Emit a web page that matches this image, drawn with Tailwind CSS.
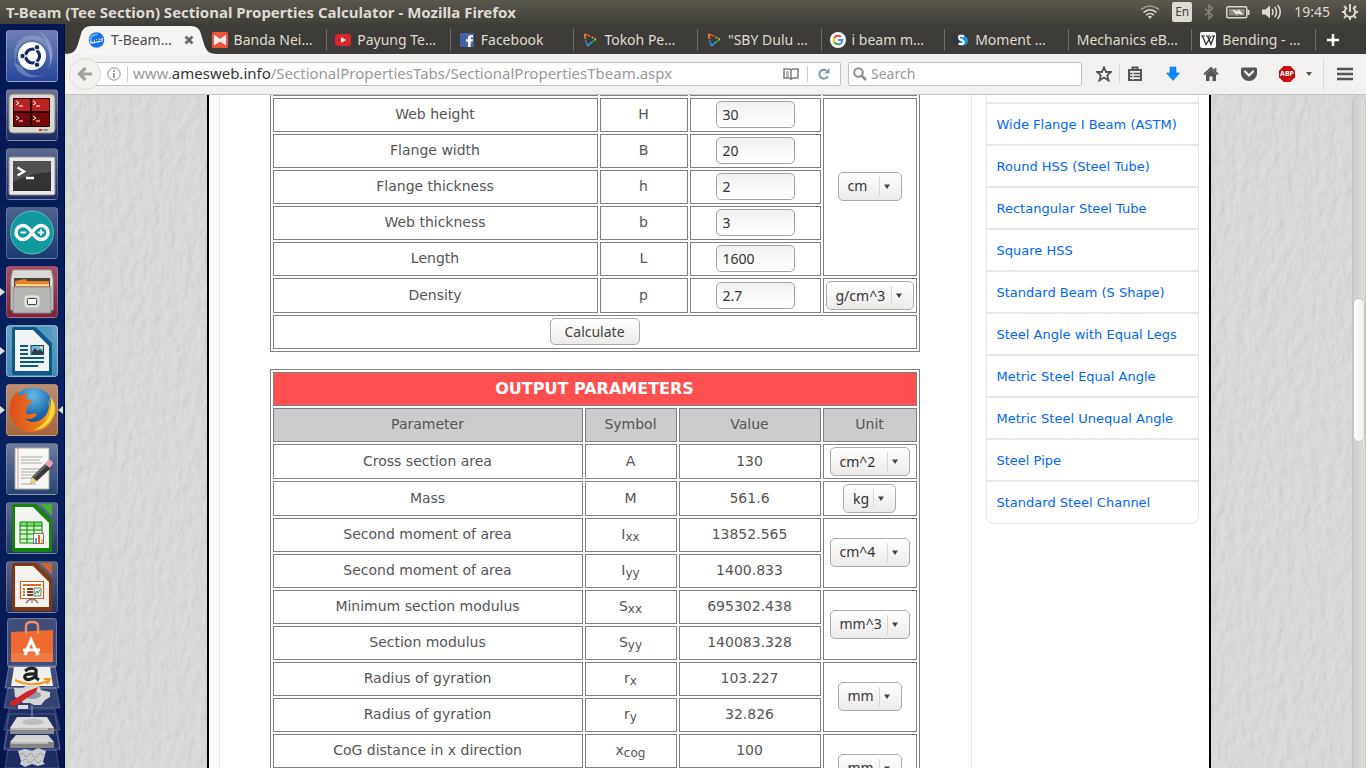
<!DOCTYPE html>
<html lang="en">
<head>
<meta charset="utf-8">
<title>T-Beam (Tee Section) Sectional Properties Calculator</title>
<script src="https://cdn.jsdelivr.net/npm/@tailwindcss/browser@4"></script>
</head>
<body class="h-screen flex flex-col overflow-hidden bg-[#3c3b37] font-['Noto_Sans',sans-serif] text-sm">

<!-- System panel -->
<header class="h-6 shrink-0 flex items-center justify-between pl-1.5 pr-2 bg-linear-to-b from-[#5b584e] to-[#403f3a] text-[#dfdbd2]">
  <h1 class="text-[15px] font-bold leading-6 whitespace-nowrap">T-Beam (Tee Section) Sectional Properties Calculator - Mozilla Firefox</h1>
  <div class="flex items-center">
    <svg class="w-5 h-4 mr-3" viewBox="0 0 20 16" fill="none" stroke="#dfdbd2" stroke-width="1.6"><path d="M1 5.500Q10 -1.500 19 5.500" opacity=".55"/><path d="M3.500 8.500Q10 3 16.500 8.500"/><path d="M6 11.200Q10 7.800 14 11.200"/><path d="M8 12.500L10 15L12 12.500Q10 11.200 8 12.500Z" fill="#dfdbd2" stroke="none"/></svg>
    <span class="w-5 h-5 mr-3 rounded-xs bg-[#dfdbd2] text-[#45433e] text-xs leading-5 text-center">En</span>
    <svg class="w-2.5 h-4 mr-3" viewBox="0 0 10 16" fill="none" stroke="#8a877e" stroke-width="1.300"><path d="M1 4.500L8.500 11.500L5 15V1L8.500 4.500L1 11.500"/></svg>
    <svg class="w-6 h-4 mr-3" viewBox="0 0 24 16"><rect x=".8" y="2.800" width="20" height="11" rx="1.500" fill="none" stroke="#dfdbd2" stroke-width="1.500"/><rect x="3" y="5" width="15.500" height="6.500" fill="#8d8a81"/><path d="M6 5.500L12.500 7.500L12 4.500L17.500 11L11 9.200L11.500 12Z" fill="#f2eee6"/><path d="M21.500 6H23.500V11H21.500Z" fill="#dfdbd2"/></svg>
    <svg class="w-5 h-4 mr-3" viewBox="0 0 20 16" fill="none" stroke="#dfdbd2" stroke-width="1.500"><path d="M0 5.500H3.500L8 1.500V14.500L3.500 10.500H0Z" fill="#dfdbd2" stroke="none"/><path d="M10 5Q12 8 10 11M12.800 3Q16.200 8 12.800 13M15.600 1Q21 8 15.600 15"/></svg>
    <time class="mr-3 leading-6">19:45</time>
    <svg class="w-4 h-4" viewBox="0 0 16 16" fill="none" stroke="#dfdbd2"><path d="M5 3.600A5.200 5.200 0 1 0 11 3.600" stroke-width="2"/><path d="M8 0V8" stroke-width="1.900"/><path d="M3.800 3.800L2 2M12.200 3.800L14 2M2.800 8H0M16 8H13.200M3.800 12.200L2 14M12.200 12.200L14 14M8 13V16" stroke-width="2"/></svg>
  </div>
</header>

<div class="flex-1 min-h-0 flex">

<!-- Launcher -->
<nav aria-label="Launcher" class="w-[65px] shrink-0 flex flex-col items-center gap-[7px] pt-1.5 pr-px overflow-hidden border-r border-[#020b30] bg-linear-to-b from-[#061653] via-[#0a2261] to-[#06164f]">
  <button aria-label="Dash" class="w-[52px] h-[52px] shrink-0 rounded-sm border border-white/30 bg-linear-to-b from-[#6d80b4] to-[#26479b]">
    <svg class="w-[50px] h-[50px]" viewBox="1 1 50 50"><path d="M10 33C4 14 16 3 32 6C44 10 48 24 44 33C45 20 38 11 27 10C16 9 9 19 10 33Z" fill="#fff" opacity=".2"/><path d="M8 32C11 46 25 52 41 43C32 48 21 46 16 37Z M33 2C47 9 51 25 42 40C46 26 44 13 33 2Z" fill="#fff" opacity=".25"/><circle cx="26" cy="26" r="14" fill="#fff"/><circle cx="26.500" cy="26" r="7" fill="none" stroke="#152762" stroke-width="3.200"/><path d="M26 26L15 26M26 26L32 16M26 26L32 36" stroke="#fff" stroke-width="1.500"/><circle cx="27" cy="26" r="4.800" fill="#fff"/><g fill="#152762" stroke="#fff" stroke-width="1"><circle cx="16.500" cy="26" r="2.700"/><circle cx="31" cy="17.300" r="2.700"/><circle cx="31" cy="34.700" r="2.700"/></g></svg>
  </button>
  <button aria-label="Terminator" class="w-[52px] h-[52px] shrink-0 rounded-sm border border-white/20 bg-linear-to-b from-[#6d7593] to-[#1a2a61]">
    <svg class="w-[50px] h-[50px]" viewBox="1 1 50 50"><rect x="3" y="5" width="46" height="39" rx="4" fill="#d9dad2" stroke="#85867f"/><rect x="7" y="9" width="37" height="29" rx="1" fill="#240000"/><path d="M8 10H24V22H8ZM26 10H43V22H26Z" fill="#bd2222"/><path d="M8 24H24V37H8ZM26 24H43V37H26Z" fill="#720a0a"/><g fill="none" stroke="#fff" stroke-width="1"><path d="M10 12L13 14L10 16M13 17H17"/><path d="M27 12L30 14L27 16M30 17H34M10 27L13 29L10 31M13 32H17M27 27L30 29L27 31M30 32H34"/></g><path d="M33 41H36" stroke="#e22" stroke-width="2"/><path d="M37 41H42" stroke="#999" stroke-width="2"/></svg>
  </button>
  <button aria-label="Terminal" class="w-[52px] h-[52px] shrink-0 rounded-sm border border-white/20 bg-linear-to-b from-[#5c6990] to-[#1a2a61]">
    <svg class="w-[50px] h-[50px]" viewBox="1 1 50 50"><rect x="3" y="9" width="46" height="38" rx="1.500" fill="#e9e9e7" stroke="#8e8e8e"/><rect x="7" y="13" width="38" height="30" fill="#333"/><path d="M7 13H45V24Q28 24 7 34Z" fill="#505050"/><path d="M11.500 19.500L18 23.500L11.500 27.500M20 30H28" fill="none" stroke="#fff" stroke-width="2.300"/></svg>
  </button>
  <button aria-label="Arduino IDE" class="w-[52px] h-[52px] shrink-0 rounded-sm border border-white/20 bg-linear-to-b from-[#4c638f] to-[#1a3a71]">
    <svg class="w-[50px] h-[50px]" viewBox="1 1 50 50"><circle cx="26" cy="25.500" r="21.500" fill="#12999f" stroke="#5cc0bf"/><path d="M26 25.500C22 19.500 19 18.500 17 18.500A7 7 0 0 0 17 32.500C19 32.500 22 31.500 26 25.500C30 19.500 33 18.500 35 18.500A7 7 0 0 1 35 32.500C33 32.500 30 31.500 26 25.500Z" fill="none" stroke="#fff" stroke-width="3.400"/><path d="M14.500 25.500H20M32 25.500H38M35 22.500V28.500" stroke="#fff" stroke-width="2"/></svg>
  </button>
  <div class="relative h-[52px] shrink-0 w-full flex justify-center">
    <svg class="absolute left-0 top-5 w-[5px] h-3" viewBox="0 0 5 12"><path d="M0 2L5 6L0 10Z" fill="#ddd"/></svg>
    <button aria-label="Files" class="w-[52px] h-[52px] rounded-sm border border-white/20 bg-linear-to-b from-[#9f5366] to-[#7a2439]">
      <svg class="w-[50px] h-[50px]" viewBox="1 1 50 50"><path d="M7 4H45L47 12V44H5V12Z" fill="#d9dad8" stroke="#a2a2a2"/><path d="M8 12H44V25H8Z" fill="#4a423d"/><path d="M9 15L19 13L21 15H43V25H9Z" fill="#e78128"/><path d="M10 18H43V20H10Z" fill="#ffd28d"/><path d="M7 21H45V47H7Z" fill="#b5b6b4" stroke="#888"/><rect x="19" y="30" width="14" height="11" rx="2" fill="#d6d6d6" stroke="#eee"/><rect x="21.500" y="32.500" width="9" height="6" rx="1" fill="#fff" stroke="#444"/></svg>
    </button>
  </div>
  <div class="relative h-[52px] shrink-0 w-full flex justify-center">
    <svg class="absolute left-0 top-5 w-[5px] h-3" viewBox="0 0 5 12"><path d="M0 2L5 6L0 10Z" fill="#ddd"/></svg>
    <button aria-label="LibreOffice Writer" class="w-[52px] h-[52px] rounded-sm border border-white/30 bg-linear-to-b from-[#6ba3c3] to-[#3f8bb5]">
      <svg class="w-[50px] h-[50px]" viewBox="1 1 50 50"><path d="M8 2H30L46 18V50H8Q6 50 6 47V4Q6 2 8 2Z" fill="#10588a"/><path d="M31 2H46V16Z" fill="#4f98c2"/><path d="M9 5H27L43 21V46H9Z" fill="#f1f3f4"/><path d="M14 21H22M14 25H22M14 29H22M14 33H38M14 37H38M14 41H32" stroke="#0c5688" stroke-width="2"/><rect x="25" y="20.500" width="12.500" height="9" fill="#6fb5e5" stroke="#0c4a76"/><path d="M26 29V27L29 23L32 26L34 24L37 27V29Z" fill="#333f45"/><circle cx="35.500" cy="22.500" r="1.500" fill="#fd5"/></svg>
    </button>
  </div>
  <div class="relative h-[52px] shrink-0 w-full flex justify-center">
    <svg class="absolute left-0 top-5 w-[5px] h-3" viewBox="0 0 5 12"><path d="M0 2L5 6L0 10Z" fill="#ddd"/></svg>
    <svg class="absolute right-0 top-5 w-[5px] h-3" viewBox="0 0 5 12"><path d="M5 2L0 6L5 10Z" fill="#ddd"/></svg>
    <button aria-label="Firefox" class="w-[52px] h-[52px] rounded-sm border border-white/20 bg-linear-to-b from-[#b98e73] to-[#a2683f]">
      <svg class="w-[50px] h-[50px]" viewBox="1 1 50 50"><defs><radialGradient id="globe" cx=".5" cy=".2" r=".8"><stop offset="0" stop-color="#67bce6"/><stop offset=".6" stop-color="#1d68ad"/><stop offset="1" stop-color="#123a73"/></radialGradient><linearGradient id="fox" x1="0" y1="0" x2="1" y2="0"><stop offset="0" stop-color="#dc4e1c"/><stop offset=".65" stop-color="#ef7a1c"/><stop offset="1" stop-color="#fbc51d"/></linearGradient></defs><circle cx="27" cy="24" r="20.500" fill="url(#globe)"/><path d="M8 11C9 9 11 8 12 8C12 10 13 11 14 12C17 10 20 10 22 10C20 12 20 14 20 15C23 16 26 16 26 18C25 20 22 20 21 22C22 26 19 27 20 29C23 32 26 28 31 30C29 35 22 36 19 34C24 41 35 38 40 31C43 26 44 21 42 16C44 18 45 22 44 26C46 22 46 16 44 13C50 19 51 27 47 34C43 43 35 48 26 48C12 48 4 37 4 26C4 20 5 15 8 11Z" fill="url(#fox)"/><path d="M44 13C50 20 49 31 43 38C38 44 32 46 28 46C37 42 43 35 44 28C45 23 45 17 44 13Z" fill="#fddd39"/></svg>
    </button>
  </div>
  <button aria-label="Text Editor" class="w-[52px] h-[52px] shrink-0 rounded-sm border border-white/20 bg-linear-to-b from-[#6f7c9d] to-[#2c426f]">
    <svg class="w-[50px] h-[50px]" viewBox="1 1 50 50"><path d="M9 5H43V46H9Z" fill="#f7f7f3" stroke="#aaa"/><path d="M12 5V46" stroke="#d99"/><path d="M15 14H37M15 17H34M15 20H36M15 26H36M15 29H33M15 32H35M15 35H30M15 41H30" stroke="#aaa"/><path d="M24 41L26 34L41 19L46 24L31 38Z" fill="#383838"/><path d="M28 34L42 20" stroke="#777" stroke-width="1.500"/><path d="M24 41L26 34L31 38Z" fill="#ecd77a"/><path d="M39 21L42 17Q45 16 47 20L44 25Z" fill="#e89fbc"/></svg>
  </button>
  <button aria-label="LibreOffice Calc" class="w-[52px] h-[52px] shrink-0 rounded-sm border border-white/20 bg-linear-to-b from-[#5d6d91] to-[#213765]">
    <svg class="w-[50px] h-[50px]" viewBox="1 1 50 50"><path d="M8 2H30L46 18V50H8Q6 50 6 47V4Q6 2 8 2Z" fill="#15830b"/><path d="M34 2H46V14Z" fill="#43b235"/><path d="M9 5H27L43 21V46H9Z" fill="#f1f3f1"/><path d="M14 20H36V41H14Z" fill="#d4f7cc"/><path d="M14 20H36V24H14Z" fill="#7edb6f"/><path d="M14 20H36V41H14ZM14 24H36M14 28H36M14 32H36M14 37H36M21 20V41M28 20V41" fill="none" stroke="#118605"/><rect x="27.500" y="31.500" width="10" height="10" fill="#fff" stroke="#777"/><path d="M29 36H31V41H29Z" fill="#59d"/><path d="M32 33H34V41H32Z" fill="#e65a1f"/><path d="M35 37H37V41H35Z" fill="#fb3"/></svg>
  </button>
  <button aria-label="LibreOffice Impress" class="w-[52px] h-[52px] shrink-0 rounded-sm border border-white/20 bg-linear-to-b from-[#5d6483] to-[#223261]">
    <svg class="w-[50px] h-[50px]" viewBox="1 1 50 50"><path d="M8 2H30L46 18V50H8Q6 50 6 47V4Q6 2 8 2Z" fill="#833711"/><path d="M34 2H46V14Z" fill="#c76834"/><path d="M9 5H27L43 21V46H9Z" fill="#f4f2f0"/><path d="M14.500 20.500H37.500V37.500H14.500ZM26 38V42" fill="#fff" stroke="#d35a1b" stroke-width="1.200"/><path d="M17 24H35" stroke="#d86c2d" stroke-width="2"/><path d="M21 28H27M21 31H27M21 34H27" stroke="#823713" stroke-width="2"/><path d="M17 28H19M17 31H19M17 34H19" stroke="#d86c2d" stroke-width="2"/><path d="M28 27H35V35H28Z" fill="#e5f0e5" stroke="#777"/><path d="M29 33L31 30L32 32L34 29" fill="none" stroke="#1b9b33"/><path d="M20 42Q26 34 32 42" fill="none" stroke="#777" stroke-width="1.500"/></svg>
  </button>
  <!-- Folded end of the launcher -->
  <svg class="w-full h-[150px] -mt-0.5 shrink-0" viewBox="0 618 63 150">
    <rect x="7.500" y="618.500" width="49" height="49" rx="3" fill="#8a8ca6" fill-opacity=".45" stroke="#9ba3c0" stroke-opacity=".6"/>
    <path d="M11 632L53 630V662H11Z" fill="#ee6a30"/><path d="M11 653H53V662H11Z" fill="#f07a46"/><path d="M26 634V626Q26 622 32 622Q38 622 38 626V634" fill="none" stroke="#ef8d62" stroke-width="2.500"/>
    <path d="M25 655L31 640L38 655M23 650H40" fill="none" stroke="#fff" stroke-width="3.200"/>
    <path d="M9 666H55L59 688H5Z" fill="#a1a8c1" fill-opacity=".35" stroke="#a5aed0" stroke-opacity=".5"/>
    <path d="M14 667H50L53 686H11Z" fill="#f1f1ee"/>
    <path d="M25 671Q32 666 36 670V678L39 680M36 674Q23 673 25 678Q28 682 36 676" fill="none" stroke="#222" stroke-width="3.200"/><path d="M15 680Q32 688 48 681M44 679L50 679L47 684" fill="none" stroke="#f49a18" stroke-width="2"/>
    <path d="M8 688H56L60 708H4Z" fill="#a1a8c1" fill-opacity=".3" stroke="#a5aed0" stroke-opacity=".4"/>
    <path d="M14 688H23L26 686H39L41 690L50 692V697L45 700L41 705H34L30 703H23L20 699L15 697Z" fill="#d6d6d6"/><ellipse cx="32" cy="695" rx="9" ry="4" fill="#8f95ab"/><path d="M10 702L28 691L38 687L36 692L15 706Q9 706 10 702Z" fill="#cf2424"/><path d="M18 705H28V709H18Z" fill="#ddd"/>
    <path d="M32 705V722" stroke="#99a" stroke-width="1"/>
    <path d="M9 709H55L60 730H4ZM9 714H55L60 748H4ZM8 730H56L60 750H4ZM8 750H56L59 768H5Z" fill="#a1a8c1" fill-opacity=".15" stroke="#a5aed0" stroke-opacity=".35"/>
    <path d="M17 717H47L54 728H10Z" fill="#dcdcdc"/><path d="M10 728H54V734H10Z" fill="#8b8b8b"/><path d="M11 729H48" stroke="#eee"/><ellipse cx="33" cy="722" rx="11" ry="3" fill="#bdbdbd"/>
    <path d="M16 735H48L54 742H10Z" fill="#d6d6d6"/><path d="M10 742H54V748H10Z" fill="#858585"/><path d="M11 743H48" stroke="#eee"/>
    <path d="M18 751L25 749L32 751L38 748L46 751L43 762L45 764L38 766L32 764L25 767L20 764L21 761Z" fill="#c9ccce"/><path d="M19 755L23 753L26 757L31 753L35 758L40 753L44 755M22 761L26 759L30 763L34 759L38 763L42 760" fill="none" stroke="#9a9fa6" stroke-width="1"/>
  </svg>
</nav>

<!-- Browser window -->
<div class="flex-1 min-w-0 flex flex-col">

  <div role="tablist" class="h-[30px] shrink-0 flex pt-0.5 pl-[15px] bg-[#3c3b37] text-[#dfdbd2] whitespace-nowrap">
    <div role="tab" aria-selected="true" class="relative flex-1 min-w-0 flex items-center pl-2 gap-1.5 text-[#4c4c4c]">
      <svg class="absolute -left-[15px] top-0 w-[152px] h-7" viewBox="0 0 152 28" preserveAspectRatio="none"><path d="M0 28C9 28 11 24 13 18L16 8Q18 0 26 0H126Q134 0 136 8L139 18C141 24 143 28 152 28Z" fill="#f6f5f4"/></svg>
      <svg class="relative w-[17px] h-4 shrink-0" viewBox="0 0 16 16"><circle cx="8" cy="8" r="7.800" fill="#1470ea"/><path d="M1.500 8Q3 2 9 2.500" fill="none" stroke="#7cc3fa" stroke-width="1.500"/><path d="M1 9L14.500 5.500L14 9.500L2 12Z" fill="#d7eaff"/><path d="M3 10.500L4.500 8L5.500 10M7 9.700V7.500L8.500 9.300L9.500 7V9M11 6.800L13 6.500M11 8.700L13 8.200" fill="none" stroke="#1248a5"/></svg>
      <span class="relative flex-1">T-Beam…</span>
      <button aria-label="Close tab" class="relative mr-[9px]"><svg class="w-2.5 h-2.5" viewBox="0 0 10 10"><path d="M1.500 1.500L8.500 8.500M8.500 1.500L1.500 8.500" stroke="#666" stroke-width="2.600"/></svg></button>
    </div>
    <div role="tab" class="flex-1 min-w-0 flex items-center pl-[9px] gap-1.5"><svg class="w-4 h-4 shrink-0" viewBox="0 0 16 16"><rect width="16" height="16" rx="1.500" fill="#ef5139"/><path d="M2 2.500L8 7L14 2.500V13.500L8 9.500L2 13.500Z" fill="#fff" fill-opacity=".9"/></svg>Banda Nei…</div>
    <div class="w-px h-[22px] mt-[3px] -mr-px bg-[#706e68]"></div>
    <div role="tab" class="flex-1 min-w-0 flex items-center pl-[9px] gap-1.5"><svg class="w-4 h-4 shrink-0" viewBox="0 0 16 16"><rect y="2" width="16" height="12" rx="2" fill="#d9252a"/><path d="M6 5.300L11 8L6 10.700Z" fill="#fff"/></svg>Payung Te…</div>
    <div class="w-px h-[22px] mt-[3px] -mr-px bg-[#706e68]"></div>
    <div role="tab" class="flex-1 min-w-0 flex items-center pl-[9px] gap-1.5"><svg class="w-4 h-4 shrink-0" viewBox="0 0 16 16"><rect x="1" y="1" width="14" height="14" fill="#4562a2"/><path d="M9 15V9.500H7V7.200H9V5.500Q9 3 12 3H14V5.300H12.700Q11.700 5.300 11.700 6V7.200H14L13.600 9.500H11.700V15Z" fill="#fff"/></svg>Facebook</div>
    <div class="w-px h-[22px] mt-[3px] -mr-px bg-[#706e68]"></div>
    <div role="tab" class="flex-1 min-w-0 flex items-center pl-[9px] gap-1.5"><svg class="w-4 h-4 shrink-0" viewBox="0 0 16 16" fill="none" stroke-width="1.600"><path d="M2.500 2L8 4" stroke="#e95726"/><path d="M2.500 2L3.500 7" stroke="#f0882b"/><path d="M3.500 8L5.500 14" stroke="#2f83d2"/><path d="M5.500 14L10 10" stroke="#36a4df"/><path d="M10 10L14 7.500" stroke="#259c56"/><path d="M14 7.500L8.500 4.500" stroke="#d7b13b" stroke-dasharray="2 1"/></svg>Tokoh Pe…</div>
    <div class="w-px h-[22px] mt-[3px] -mr-px bg-[#706e68]"></div>
    <div role="tab" class="flex-1 min-w-0 flex items-center pl-[9px] gap-1.5"><svg class="w-4 h-4 shrink-0" viewBox="0 0 16 16" fill="none" stroke-width="1.600"><path d="M2.500 2L8 4" stroke="#e95726"/><path d="M2.500 2L3.500 7" stroke="#f0882b"/><path d="M3.500 8L5.500 14" stroke="#2f83d2"/><path d="M5.500 14L10 10" stroke="#36a4df"/><path d="M10 10L14 7.500" stroke="#259c56"/><path d="M14 7.500L8.500 4.500" stroke="#d7b13b" stroke-dasharray="2 1"/></svg>"SBY Dulu …</div>
    <div class="w-px h-[22px] mt-[3px] -mr-px bg-[#706e68]"></div>
    <div role="tab" class="flex-1 min-w-0 flex items-center pl-[9px] gap-1.5"><svg class="w-4 h-4 shrink-0" viewBox="0 0 16 16" fill="none" stroke-width="2"><circle cx="8" cy="8" r="8" fill="#fff"/><path d="M4.300 5.800A4.300 4.300 0 0 1 11 4.900" stroke="#ea4335"/><path d="M4.300 10.200A4.600 4.600 0 0 1 4.300 5.800" stroke="#fbbc05"/><path d="M4.300 10.200A4.300 4.300 0 0 0 10.900 11.200" stroke="#34a853"/><path d="M10.900 11.200Q12.300 10 12.300 8H8.200" stroke="#4285f4"/></svg>i beam m…</div>
    <div class="w-px h-[22px] mt-[3px] -mr-px bg-[#706e68]"></div>
    <div role="tab" class="flex-1 min-w-0 flex items-center pl-[9px] gap-1.5"><svg class="w-4 h-4 shrink-0" viewBox="0 0 16 16"><circle cx="4.500" cy="8.500" r="4.500" fill="#2d333a"/><path d="M9 2Q15 5 15 9Q15 13 9 14L6 8Z" fill="#2496cf"/><path d="M11 4.500Q5.500 2.500 5.800 5.500Q6.200 7.500 8.500 8Q11.500 9 10.500 11Q9 13 5.500 11.500" fill="none" stroke="#fff" stroke-width="2"/></svg>Moment …</div>
    <div class="w-px h-[22px] mt-[3px] -mr-px bg-[#706e68]"></div>
    <div role="tab" class="flex-1 min-w-0 flex items-center pl-[9px] gap-1.5">Mechanics eB…</div>
    <div class="w-px h-[22px] mt-[3px] -mr-px bg-[#706e68]"></div>
    <div role="tab" class="flex-1 min-w-0 flex items-center pl-[9px] gap-1.5"><svg class="w-4 h-4 shrink-0" viewBox="0 0 16 16"><rect width="16" height="16" rx="2" fill="#fff"/><path d="M1 4H5M6 4H10M11.500 4H15M2.500 4L6 12.500L11 4.500M7.500 4L11 12.500L14 4" fill="none" stroke="#222" stroke-width="1.200"/></svg>Bending - …</div>
    <div class="w-px h-[22px] mt-[3px] -mr-px bg-[#706e68]"></div>
    <button aria-label="New tab" class="w-[51px] shrink-0 pl-[11px] flex items-center"><svg class="w-3.5 h-3.5" viewBox="0 0 14 14"><path d="M7 1V13M1 7H13" stroke="#fff" stroke-width="2.600"/></svg></button>
  </div>

  <div class="h-[41px] shrink-0 flex items-center pl-1 pr-[9px] bg-[#f3f2f1] border-b border-[#c9c4bf]">
    <button aria-label="Back" class="relative z-10 w-8 h-8 shrink-0 rounded-full border border-[#dcdad7] bg-[#f3f2f1] flex items-center justify-center"><svg class="w-4 h-4" viewBox="0 0 16 16"><path d="M8.500 2L2.500 8L8.500 14M3 8H15" fill="none" stroke="#a0a09e" stroke-width="3.200"/></svg></button>
    <div class="flex-1 min-w-0 h-6 -ml-2 pl-[13px] flex items-center rounded-r-xs border border-[#c4c1bd] bg-white">
      <svg class="w-3.5 h-3.5 shrink-0" viewBox="0 0 14 14"><circle cx="7" cy="7" r="6.200" fill="none" stroke="#8c8c8c"/><path d="M7 6V11M7 3V5" stroke="#8c8c8c" stroke-width="1.600"/></svg>
      <span class="w-px h-4 ml-1.5 mr-[5px] bg-[#ccc]"></span>
      <div class="flex-1 whitespace-nowrap text-[15px] text-[#999]">www.<span class="text-[#333]">amesweb.info</span>/SectionalPropertiesTabs/SectionalPropertiesTbeam.aspx</div>
      <svg class="w-4 h-3 shrink-0" viewBox="0 0 16 12" fill="none" stroke="#7c7c7c" stroke-width="1.500"><path d="M8 2V11.500M8 2Q7 1 5 1H1V10H5.500Q7.500 10 8 11.500Q8.500 10 10.500 10H15V1H11Q9 1 8 2"/><path d="M3 4H6M3 6H6M3 8H6" stroke-width="1"/></svg>
      <span class="w-px h-4 ml-2 mr-2.5 bg-[#ccc]"></span>
      <svg class="w-3 h-3 mr-2.5 shrink-0" viewBox="0 0 12 12"><path d="M10 8A4.500 4.500 0 1 1 8.500 2.500" fill="none" stroke="#8499ae" stroke-width="2"/><path d="M11.500 0V5.500H6Z" fill="#8499ae"/></svg>
    </div>
    <label class="w-[234px] shrink-0 h-6 ml-[7px] pl-1 flex items-center gap-1 rounded-xs border border-[#c4c1bd] bg-white">
      <svg class="w-3.5 h-3.5 shrink-0" viewBox="0 0 14 14"><circle cx="5.500" cy="5.500" r="4.300" fill="none" stroke="#8d8d8d" stroke-width="2"/><path d="M8.500 8.500L13 13" stroke="#8d8d8d" stroke-width="2.600"/></svg>
      <input aria-label="Search" type="text" placeholder="Search" class="w-full bg-transparent outline-none placeholder:text-[#999]">
    </label>
    <button aria-label="Bookmark this page" class="ml-3.5 shrink-0"><svg class="w-4 h-4" viewBox="0 0 16 16"><path d="M8 1.300L10 6H15L11.200 9.300L12.600 14.500L8 11.500L3.400 14.500L4.800 9.300L1 6H6Z" fill="none" stroke="#555" stroke-width="1.800"/></svg></button>
    <span class="w-px h-[18px] ml-[7px] mr-2 bg-[#d4d2cf]"></span>
    <button aria-label="Bookmarks list" class="shrink-0"><svg class="w-3.5 h-4" viewBox="0 0 14 16" fill="none" stroke="#555"><path d="M1 4H13V14H1Z" stroke-width="2"/><path d="M4.500 3.500V1.500H9.500V3.500" stroke-width="2"/><path d="M2 7.500H12M2 10.500H12" stroke-width="1.400"/><path d="M5 5V14" stroke="#f3f2f1"/></svg></button>
    <button aria-label="Downloads" class="ml-6 shrink-0"><svg class="w-3.5 h-4" viewBox="0 0 14 16"><path d="M4 1H10V7H13.500L7 14.500L.5 7H4Z" fill="#0a8cff" stroke="#0a70d8" stroke-width=".6"/></svg></button>
    <button aria-label="Home" class="ml-[23px] shrink-0"><svg class="w-4 h-4" viewBox="0 0 16 16"><path d="M8 3.500L13 8V15H9.500V10.500H6.500V15H3V8Z" fill="#555"/><path d="M1 8.500L8 2L15 8.500M12.500 2V5" fill="none" stroke="#555" stroke-width="1.900"/></svg></button>
    <button aria-label="Pocket" class="ml-[22px] shrink-0"><svg class="w-4 h-4" viewBox="0 0 16 16"><path d="M1.500 1.500H14.500Q16 1.500 16 3V7.500A8 7.500 0 0 1 0 7.500V3Q0 1.500 1.500 1.500Z" fill="#555"/><path d="M4 5.500L8 9.500L12 5.500" fill="none" stroke="#f3f2f1" stroke-width="2.200" stroke-linecap="round"/></svg></button>
    <button aria-label="Adblock Plus" class="relative ml-[22px] w-4 h-4 shrink-0 flex items-center justify-center"><svg class="absolute inset-0 w-4 h-4" viewBox="0 0 16 16"><path d="M4.700 0H11.300L16 4.700V11.300L11.300 16H4.700L0 11.300V4.700Z" fill="#c70d0d"/></svg><span class="relative text-[7px] font-bold text-white">ABP</span></button>
    <svg class="w-1.5 h-1.5 ml-[11px] shrink-0" viewBox="0 0 6 6"><path d="M0 1H6L3 5Z" fill="#555"/></svg>
    <span class="w-px h-8 ml-[11px] mr-[13px] bg-[#dddbd8]"></span>
    <button aria-label="Menu" class="mr-1 shrink-0"><svg class="w-4 h-3.5" viewBox="0 0 16 14"><path d="M0 2H16M0 7H16M0 12H16" stroke="#555" stroke-width="2.600"/></svg></button>
  </div>

  <!-- Page -->
  <div class="relative flex-1 min-h-0 flex bg-[#d0d0d0] font-['DejaVu_Sans',sans-serif] text-[#555]">
    <svg class="absolute inset-0 w-full h-full" aria-hidden="true">
      <filter id="plaster" x="0" y="0" width="100%" height="100%"><feTurbulence type="fractalNoise" baseFrequency=".12 .07" numOctaves="5" seed="4" result="n"/><feDiffuseLighting in="n" surfaceScale=".9" diffuseConstant="1" lighting-color="#dedede"><feDistantLight azimuth="215" elevation="70"/></feDiffuseLighting></filter>
      <rect width="100%" height="100%" filter="url(#plaster)"/>
    </svg>
    <main class="relative flex-1 min-w-0 overflow-hidden">
      <div class="w-[1004px] h-full mx-auto flex border-x-2 border-black bg-white pl-2.5">
        <div class="w-[753px] shrink-0 border-x border-[#e6e6e6]">
          <table class="w-[650px] ml-[50px] -mt-0.5 table-fixed border-separate border-spacing-[2px] border border-t-0 border-[#808080] text-center text-sm leading-5">
            <colgroup><col class="w-[325px]"><col class="w-[88px]"><col class="w-[131px]"><col class="w-[94px]"></colgroup>
            <tbody>
            <tr class="h-px"><td class="border-b border-[#808080]"></td><td class="border-b border-[#808080]"></td><td class="border-b border-[#808080]"></td><td class="border-b border-[#808080]"></td></tr>
            <tr class="h-[34px]"><td class="border border-[#808080] pb-0.5"><label for="H">Web height</label></td><td class="border border-[#808080] pb-0.5">H</td><td class="border border-[#808080]"><input id="H" value="30" class="block mx-auto mb-px w-[79px] h-[27px] px-1.5 rounded-[5px] border border-[#a5a3a0] bg-linear-to-b from-[#f1f1f1] to-white font-['Noto_Sans',sans-serif] text-[#333]"></td>
              <td rowspan="5" class="border border-[#808080]"><span class="relative inline-block align-middle mb-0.5"><select aria-label="Length unit" class="block w-16 h-[29px] appearance-none rounded-[5px] border border-[#aeaba7] bg-linear-to-b from-white to-[#edebea] pl-[9px] font-['Noto_Sans',sans-serif] text-[#333]"><option>cm</option></select><svg class="absolute right-2.5 top-[5px] w-[13px] h-[19px] pointer-events-none" viewBox="0 0 13 19"><path d="M.5 0V19" stroke="#d8d6d3"/><path d="M5 7.500H11L8 12Z" fill="#444"/></svg></span></td></tr>
            <tr class="h-[34px]"><td class="border border-[#808080] pb-0.5"><label for="B">Flange width</label></td><td class="border border-[#808080] pb-0.5">B</td><td class="border border-[#808080]"><input id="B" value="20" class="block mx-auto mb-px w-[79px] h-[27px] px-1.5 rounded-[5px] border border-[#a5a3a0] bg-linear-to-b from-[#f1f1f1] to-white font-['Noto_Sans',sans-serif] text-[#333]"></td></tr>
            <tr class="h-[34px]"><td class="border border-[#808080] pb-0.5"><label for="hh">Flange thickness</label></td><td class="border border-[#808080] pb-0.5">h</td><td class="border border-[#808080]"><input id="hh" value="2" class="block mx-auto mb-px w-[79px] h-[27px] px-1.5 rounded-[5px] border border-[#a5a3a0] bg-linear-to-b from-[#f1f1f1] to-white font-['Noto_Sans',sans-serif] text-[#333]"></td></tr>
            <tr class="h-[34px]"><td class="border border-[#808080] pb-0.5"><label for="bb">Web thickness</label></td><td class="border border-[#808080] pb-0.5">b</td><td class="border border-[#808080]"><input id="bb" value="3" class="block mx-auto mb-px w-[79px] h-[27px] px-1.5 rounded-[5px] border border-[#a5a3a0] bg-linear-to-b from-[#f1f1f1] to-white font-['Noto_Sans',sans-serif] text-[#333]"></td></tr>
            <tr class="h-[34px]"><td class="border border-[#808080] pb-0.5"><label for="L">Length</label></td><td class="border border-[#808080] pb-0.5">L</td><td class="border border-[#808080]"><input id="L" value="1600" class="block mx-auto mb-px w-[79px] h-[27px] px-1.5 rounded-[5px] border border-[#a5a3a0] bg-linear-to-b from-[#f1f1f1] to-white font-['Noto_Sans',sans-serif] text-[#333]"></td></tr>
            <tr class="h-[35px]"><td class="border border-[#808080] pb-0.5"><label for="p">Density</label></td><td class="border border-[#808080] pb-0.5">p</td><td class="border border-[#808080]"><input id="p" value="2.7" class="block mx-auto w-[79px] h-[27px] px-1.5 rounded-[5px] border border-[#a5a3a0] bg-linear-to-b from-[#f1f1f1] to-white font-['Noto_Sans',sans-serif] text-[#333]"></td>
              <td class="border border-[#808080]"><span class="relative inline-block align-middle"><select aria-label="Density unit" class="block w-[88px] h-[29px] appearance-none rounded-[5px] border border-[#aeaba7] bg-linear-to-b from-white to-[#edebea] pl-[9px] font-['Noto_Sans',sans-serif] text-[#333]"><option>g/cm^3</option></select><svg class="absolute right-2.5 top-[5px] w-[13px] h-[19px] pointer-events-none" viewBox="0 0 13 19"><path d="M.5 0V19" stroke="#d8d6d3"/><path d="M5 7.500H11L8 12Z" fill="#444"/></svg></span></td></tr>
            <tr class="h-[34px]"><td colspan="4" class="border border-[#808080]"><button class="block mx-auto mb-px w-[90px] h-[27px] rounded-[5px] border border-[#aeaba7] bg-linear-to-b from-white to-[#edebea] font-['Noto_Sans',sans-serif] text-[#444]">Calculate</button></td></tr>
            </tbody>
          </table>

          <table class="w-[650px] ml-[50px] mt-[17px] table-fixed border-separate border-spacing-[2px] border border-[#808080] text-center text-sm leading-5">
            <colgroup><col class="w-[310px]"><col class="w-[92px]"><col class="w-[142px]"><col class="w-[94px]"></colgroup>
            <thead>
            <tr class="h-[34px]"><th colspan="4" class="border border-[#808080] bg-[#ff4f4f] text-base leading-5 font-bold text-white">OUTPUT PARAMETERS</th></tr>
            <tr class="h-[34px]"><th class="border border-[#808080] bg-[#ccc] font-normal pb-0.5">Parameter</th><th class="border border-[#808080] bg-[#ccc] font-normal pb-0.5">Symbol</th><th class="border border-[#808080] bg-[#ccc] font-normal pb-0.5">Value</th><th class="border border-[#808080] bg-[#ccc] font-normal pb-0.5">Unit</th></tr>
            </thead>
            <tbody>
            <tr class="h-[35px]"><td class="border border-[#808080] pb-0.5">Cross section area</td><td class="border border-[#808080] pb-0.5">A</td><td class="border border-[#808080] pb-0.5">130</td><td class="border border-[#808080]"><span class="relative inline-block align-middle"><select aria-label="Area unit" class="block w-20 h-[29px] appearance-none rounded-[5px] border border-[#aeaba7] bg-linear-to-b from-white to-[#edebea] pl-[9px] font-['Noto_Sans',sans-serif] text-[#333]"><option>cm^2</option></select><svg class="absolute right-2.5 top-[5px] w-[13px] h-[19px] pointer-events-none" viewBox="0 0 13 19"><path d="M.5 0V19" stroke="#d8d6d3"/><path d="M5 7.500H11L8 12Z" fill="#444"/></svg></span></td></tr>
            <tr class="h-[35px]"><td class="border border-[#808080] pb-0.5">Mass</td><td class="border border-[#808080] pb-0.5">M</td><td class="border border-[#808080] pb-0.5">561.6</td><td class="border border-[#808080]"><span class="relative inline-block align-middle"><select aria-label="Mass unit" class="block w-[53px] h-[29px] appearance-none rounded-[5px] border border-[#aeaba7] bg-linear-to-b from-white to-[#edebea] pl-[9px] font-['Noto_Sans',sans-serif] text-[#333]"><option>kg</option></select><svg class="absolute right-2.5 top-[5px] w-[13px] h-[19px] pointer-events-none" viewBox="0 0 13 19"><path d="M.5 0V19" stroke="#d8d6d3"/><path d="M5 7.500H11L8 12Z" fill="#444"/></svg></span></td></tr>
            <tr class="h-[34px]"><td class="border border-[#808080] pb-0.5">Second moment of area</td><td class="border border-[#808080] pb-0.5">I<sub class="text-xs leading-none -bottom-0.5">xx</sub></td><td class="border border-[#808080] pb-0.5">13852.565</td><td rowspan="2" class="border border-[#808080]"><span class="relative inline-block align-middle mb-0.5"><select aria-label="Second moment unit" class="block w-20 h-[29px] appearance-none rounded-[5px] border border-[#aeaba7] bg-linear-to-b from-white to-[#edebea] pl-[9px] font-['Noto_Sans',sans-serif] text-[#333]"><option>cm^4</option></select><svg class="absolute right-2.5 top-[5px] w-[13px] h-[19px] pointer-events-none" viewBox="0 0 13 19"><path d="M.5 0V19" stroke="#d8d6d3"/><path d="M5 7.500H11L8 12Z" fill="#444"/></svg></span></td></tr>
            <tr class="h-[34px]"><td class="border border-[#808080] pb-0.5">Second moment of area</td><td class="border border-[#808080] pb-0.5">I<sub class="text-xs leading-none -bottom-0.5">yy</sub></td><td class="border border-[#808080] pb-0.5">1400.833</td></tr>
            <tr class="h-[34px]"><td class="border border-[#808080] pb-0.5">Minimum section modulus</td><td class="border border-[#808080] pb-0.5">S<sub class="text-xs leading-none -bottom-0.5">xx</sub></td><td class="border border-[#808080] pb-0.5">695302.438</td><td rowspan="2" class="border border-[#808080]"><span class="relative inline-block align-middle mb-0.5"><select aria-label="Section modulus unit" class="block w-20 h-[29px] appearance-none rounded-[5px] border border-[#aeaba7] bg-linear-to-b from-white to-[#edebea] pl-[9px] font-['Noto_Sans',sans-serif] text-[#333]"><option>mm^3</option></select><svg class="absolute right-2.5 top-[5px] w-[13px] h-[19px] pointer-events-none" viewBox="0 0 13 19"><path d="M.5 0V19" stroke="#d8d6d3"/><path d="M5 7.500H11L8 12Z" fill="#444"/></svg></span></td></tr>
            <tr class="h-[34px]"><td class="border border-[#808080] pb-0.5">Section modulus</td><td class="border border-[#808080] pb-0.5">S<sub class="text-xs leading-none -bottom-0.5">yy</sub></td><td class="border border-[#808080] pb-0.5">140083.328</td></tr>
            <tr class="h-[34px]"><td class="border border-[#808080] pb-0.5">Radius of gyration</td><td class="border border-[#808080] pb-0.5">r<sub class="text-xs leading-none -bottom-0.5">x</sub></td><td class="border border-[#808080] pb-0.5">103.227</td><td rowspan="2" class="border border-[#808080]"><span class="relative inline-block align-middle mb-0.5"><select aria-label="Radius of gyration unit" class="block w-16 h-[29px] appearance-none rounded-[5px] border border-[#aeaba7] bg-linear-to-b from-white to-[#edebea] pl-[9px] font-['Noto_Sans',sans-serif] text-[#333]"><option>mm</option></select><svg class="absolute right-2.5 top-[5px] w-[13px] h-[19px] pointer-events-none" viewBox="0 0 13 19"><path d="M.5 0V19" stroke="#d8d6d3"/><path d="M5 7.500H11L8 12Z" fill="#444"/></svg></span></td></tr>
            <tr class="h-[34px]"><td class="border border-[#808080] pb-0.5">Radius of gyration</td><td class="border border-[#808080] pb-0.5">r<sub class="text-xs leading-none -bottom-0.5">y</sub></td><td class="border border-[#808080] pb-0.5">32.826</td></tr>
            <tr class="h-[34px]"><td class="border border-[#808080] pb-0.5">CoG distance in x direction</td><td class="border border-[#808080] pb-0.5">x<sub class="text-xs leading-none -bottom-0.5">cog</sub></td><td class="border border-[#808080] pb-0.5">100</td><td rowspan="2" class="border border-[#808080]"><span class="relative inline-block align-middle mb-0.5"><select aria-label="CoG distance unit" class="block w-16 h-[29px] appearance-none rounded-[5px] border border-[#aeaba7] bg-linear-to-b from-white to-[#edebea] pl-[9px] font-['Noto_Sans',sans-serif] text-[#333]"><option>mm</option></select><svg class="absolute right-2.5 top-[5px] w-[13px] h-[19px] pointer-events-none" viewBox="0 0 13 19"><path d="M.5 0V19" stroke="#d8d6d3"/><path d="M5 7.500H11L8 12Z" fill="#444"/></svg></span></td></tr>
            <tr class="h-[34px]"><td class="border border-[#808080]"></td><td class="border border-[#808080]"></td><td class="border border-[#808080]"></td></tr>
            </tbody>
          </table>
        </div>
        <aside class="flex-1 pl-3.5 pr-2.5">
          <ul class="border border-t-0 border-[#e4e8eb] rounded-b-lg text-[13px] text-[#0066ff]">
            <li class="h-[9px] border-b-2 border-[#e4e8eb]"></li>
            <li class="h-[42px] pl-2.5 border-b-2 border-[#e4e8eb] leading-[42px]"><a href="#">Wide Flange I Beam (ASTM)</a></li>
            <li class="h-[42px] pl-2.5 border-b-2 border-[#e4e8eb] leading-[42px]"><a href="#">Round HSS (Steel Tube)</a></li>
            <li class="h-[42px] pl-2.5 border-b-2 border-[#e4e8eb] leading-[42px]"><a href="#">Rectangular Steel Tube</a></li>
            <li class="h-[42px] pl-2.5 border-b-2 border-[#e4e8eb] leading-[42px]"><a href="#">Square HSS</a></li>
            <li class="h-[42px] pl-2.5 border-b-2 border-[#e4e8eb] leading-[42px]"><a href="#">Standard Beam (S Shape)</a></li>
            <li class="h-[42px] pl-2.5 border-b-2 border-[#e4e8eb] leading-[42px]"><a href="#">Steel Angle with Equal Legs</a></li>
            <li class="h-[42px] pl-2.5 border-b-2 border-[#e4e8eb] leading-[42px]"><a href="#">Metric Steel Equal Angle</a></li>
            <li class="h-[42px] pl-2.5 border-b-2 border-[#e4e8eb] leading-[42px]"><a href="#">Metric Steel Unequal Angle</a></li>
            <li class="h-[42px] pl-2.5 border-b-2 border-[#e4e8eb] leading-[42px]"><a href="#">Steel Pipe</a></li>
            <li class="h-[41px] pl-2.5 leading-[42px]"><a href="#">Standard Steel Channel</a></li>
          </ul>
        </aside>
      </div>
    </main>
    <div class="relative w-3.5 shrink-0 pt-[203px] rounded-t-full border-x border-[#c4c1bd] bg-linear-to-r from-[#cfcdcc] to-[#dedddc]">
      <div class="h-36 rounded-full border border-[#c9c7c4] bg-linear-to-r from-white to-[#f0efed]"></div>
    </div>
  </div>
</div>
</div>
</body>
</html>
